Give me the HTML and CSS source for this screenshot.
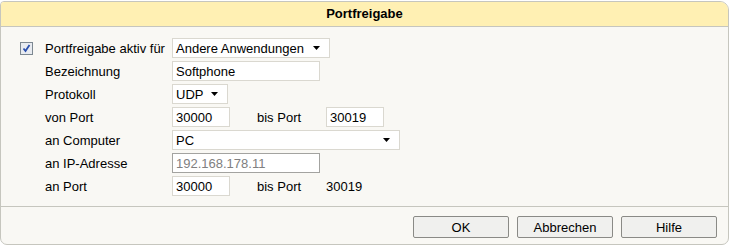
FILE: index.html
```html
<!DOCTYPE html>
<html lang="de">
<head>
<meta charset="utf-8">
<title>Portfreigabe</title>
<link rel="stylesheet" href="styles.css">
</head>
<body>
<div class="panel">
  <div class="head">Portfreigabe</div>
  <div class="content">
    <div class="row">
      <div class="chk-cell">
        <span class="chk"><svg width="11" height="11" viewBox="0 0 11 11"><path d="M2.5 5.5 L4.5 8 L8.5 2" fill="none" stroke="#2a4fae" stroke-width="1.8"/></svg></span>
      </div>
      <div class="label">Portfreigabe aktiv für</div>
      <div class="select w158"><span>Andere Anwendungen</span><svg class="arrow" width="7" height="4" viewBox="0 0 7 4"><path d="M0 0H7L3.5 4Z" fill="#000"/></svg></div>
    </div>
    <div class="row">
      <div class="chk-cell"></div>
      <div class="label">Bezeichnung</div>
      <input class="field w148" type="text" value="Softphone">
    </div>
    <div class="row">
      <div class="chk-cell"></div>
      <div class="label">Protokoll</div>
      <div class="select w56"><span>UDP</span><svg class="arrow" width="7" height="4" viewBox="0 0 7 4"><path d="M0 0H7L3.5 4Z" fill="#000"/></svg></div>
    </div>
    <div class="row">
      <div class="chk-cell"></div>
      <div class="label">von Port</div>
      <input class="field w58" type="text" value="30000">
      <div class="sublabel">bis Port</div>
      <input class="field w58" type="text" value="30019">
    </div>
    <div class="row">
      <div class="chk-cell"></div>
      <div class="label">an Computer</div>
      <div class="select w228"><span>PC</span><svg class="arrow" width="7" height="4" viewBox="0 0 7 4"><path d="M0 0H7L3.5 4Z" fill="#000"/></svg></div>
    </div>
    <div class="row">
      <div class="chk-cell"></div>
      <div class="label">an IP-Adresse</div>
      <input class="field w148 disabled" type="text" value="192.168.178.11" disabled>
    </div>
    <div class="row">
      <div class="chk-cell"></div>
      <div class="label">an Port</div>
      <input class="field w58" type="text" value="30000">
      <div class="sublabel">bis Port</div>
      <div class="plain">30019</div>
    </div>
  </div>
  <div class="foot">
    <button class="btn" type="button">OK</button>
    <button class="btn" type="button">Abbrechen</button>
    <button class="btn" type="button">Hilfe</button>
  </div>
</div>
</body>
</html>
```

FILE: styles.css
```css
* { box-sizing: border-box; }
html, body { margin: 0; padding: 0; background: #ffffff; }
body {
  font-family: "Liberation Sans", Arial, sans-serif;
  font-size: 13px;
  color: #000;
}
.panel {
  margin: 1px 0 0 0;
  width: 729px;
  height: 244px;
  border: 1px solid #c6c6be;
  border-radius: 4px 9px 7px 7px;
  background: #f9f8f4;
  overflow: hidden;
  display: flex;
  flex-direction: column;
}
.head {
  height: 25px;
  background: #fff0b3;
  border-bottom: 1px solid #c6c6be;
  text-align: center;
  font-weight: bold;
  line-height: 24px;
}
.content {
  padding: 11px 0 10px 19px;
  display: flex;
  flex-direction: column;
  gap: 3px;
  border-bottom: 1px solid #c6c6be;
}
.row {
  display: flex;
  align-items: center;
  height: 20px;
}
.chk-cell { width: 25px; height: 20px; display: flex; align-items: center; }
.chk {
  width: 13px; height: 13px;
  border: 1px solid #7d8891;
  background: #e8ebf0;
  display: flex; align-items: center; justify-content: center;
}
.label { width: 127px; }
.sublabel { width: 69px; margin-left: 27px; }
.field, .select {
  height: 20px;
  border: 1px solid #dad8d0;
  background: #fff;
  font: inherit;
  color: #000;
  padding: 0 0 0 3px;
  margin: 0;
  outline: none;
}
.field.disabled {
  border-color: #a3a3a0;
  color: #808080;
  background: #fff;
}
.select { display: flex; align-items: center; justify-content: space-between; padding-right: 9px; }
.arrow { display: block; }
.w158 { width: 158px; }
.w148 { width: 148px; }
.w56 { width: 56px; }
.w58 { width: 58px; }
.w228 { width: 228px; }
.foot {
  display: flex;
  justify-content: flex-end;
  gap: 8px;
  padding: 9px 11px 0 0;
}
.btn {
  width: 96px;
  height: 22px;
  border: 1px solid #8a8a86;
  border-radius: 2px;
  background: #f0f0ee;
  font: inherit;
  color: #000;
  padding: 0;
}
```
